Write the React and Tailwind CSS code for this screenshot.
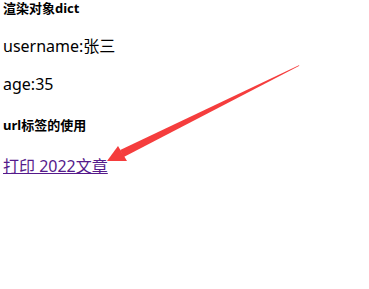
export default function App() {
  return (
    <div className="relative w-[369px] h-[289px] bg-white overflow-hidden font-['Noto_Sans','Noto_Sans_CJK_SC',sans-serif] text-black">
      <div className="pl-[3px]">
        <h5 className="text-[13px] leading-[17px] font-bold">渲染对象dict</h5>
        <p className="mt-[18px] text-[16px] leading-[22px]">username:张三</p>
        <p className="mt-[16px] text-[16px] leading-[22px]">age:35</p>
        <h5 className="mt-[22px] text-[13px] leading-[17px] font-bold">url标签的使用</h5>
        <a href="#" className="block mt-[21px] w-fit text-[16px] leading-[22px] text-[#551a8b] underline">
          打印 2022文章
        </a>
      </div>
      <svg className="absolute left-0 top-0" width="369" height="289" viewBox="0 0 369 289">
        <polygon points="299.4,65.8 123.8,157.1 120.2,149.9 298.9,65.3" fill="#f53d3d" />
        <polygon points="107,161 118,146 127,161" fill="#f53d3d" />
      </svg>
    </div>
  );
}
